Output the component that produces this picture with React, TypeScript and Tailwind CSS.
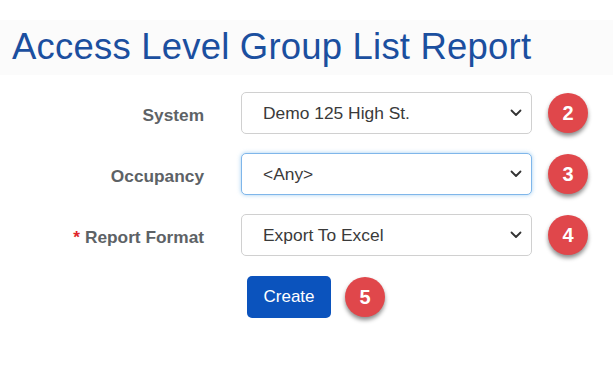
import React from 'react'

const font = { fontFamily: '"Liberation Sans", Arial, Helvetica, sans-serif' }

function Chevron() {
  return (
    <svg width="12" height="8" viewBox="0 0 12 8" className="shrink-0">
      <path d="M1.5 1.5 L6 6 L10.5 1.5" fill="none" stroke="#333" strokeWidth="1.8" strokeLinecap="round" strokeLinejoin="round" />
    </svg>
  )
}

function Badge({ n }: { n: number }) {
  return (
    <div className="w-10 h-10 rounded-full bg-[#e0474b] flex items-center justify-center text-white text-[20px] font-bold shadow-[0_3px_4px_rgba(0,0,0,0.45)]">
      {n}
    </div>
  )
}

function SelectBox({ value, focused }: { value: string; focused?: boolean }) {
  return (
    <div
      className={`w-[291px] h-[42px] rounded-[5px] bg-white flex items-center justify-between pl-[21px] pr-[9px] text-[17.4px] text-[#3a3a3a] border ${
        focused ? 'border-[#7fb6ea] shadow-[0_0_4px_rgba(102,175,233,0.6)]' : 'border-[#d0d0d0]'
      }`}
    >
      <span>{value}</span>
      <Chevron />
    </div>
  )
}

function Row({ label, value, n, focused, required }: { label: string; value: string; n: number; focused?: boolean; required?: boolean }) {
  return (
    <div className="flex items-center">
      <div className="w-[204px] pt-[5px] text-right text-[17.3px] font-bold text-[#5d6266]">
        {required && <span className="text-[#e0262b] mr-[5px]">*</span>}
        {label}
      </div>
      <div className="ml-[37px]">
        <SelectBox value={value} focused={focused} />
      </div>
      <div className="ml-4">
        <Badge n={n} />
      </div>
    </div>
  )
}

export default function App() {
  return (
    <div className="w-[613px] h-[366px] bg-white" style={font}>
      <div className="pt-[20px]">
        <div className="h-[55px] bg-[#fbfbfb] flex items-center pl-[12px]">
          <h1 className="text-[36.5px] leading-none text-[#1b4f9f] tracking-[0.2px]">Access Level Group List Report</h1>
        </div>
      </div>
      <div className="mt-[17px] flex flex-col gap-[19px]">
        <Row label="System" value="Demo 125 High St." n={2} />
        <Row label="Occupancy" value="<Any>" n={3} focused />
        <Row label="Report Format" value="Export To Excel" n={4} required />
      </div>
      <div className="mt-[20px] ml-[247px] flex items-center">
        <button className="w-[84px] h-[42px] rounded-[5px] bg-[#0b53bd] text-white text-[17px]">Create</button>
        <div className="ml-[14px]">
          <Badge n={5} />
        </div>
      </div>
    </div>
  )
}
